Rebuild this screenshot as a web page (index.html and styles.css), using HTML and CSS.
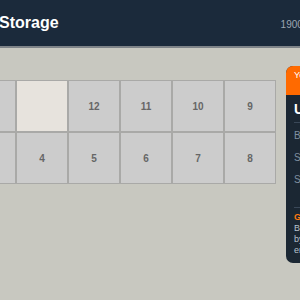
FILE: index.html
```html
<!DOCTYPE html>
<html>
<head>
<meta charset="utf-8">
<link rel="stylesheet" href="styles.css">
</head>
<body>
<header class="topbar">
  <h1 class="title">Storage</h1>
  <span class="meta">1900 / 2400 kg</span>
</header>
<main class="main">
  <section class="grid">
    <div class="cell"></div>
    <div class="cell cell-empty"></div>
    <div class="cell">12</div>
    <div class="cell">11</div>
    <div class="cell">10</div>
    <div class="cell">9</div>
    <div class="cell">3</div>
    <div class="cell">4</div>
    <div class="cell">5</div>
    <div class="cell">6</div>
    <div class="cell">7</div>
    <div class="cell">8</div>
  </section>
  <aside class="panel">
    <div class="panel-head">Your selection</div>
    <div class="panel-body">
      <div class="panel-title">Unit 13</div>
      <div class="row">Bay: A</div>
      <div class="row">Size: 2 × 2 m</div>
      <div class="row">Status: free</div>
      <div class="guide">
        <div class="guide-title">Guide</div>
        <div class="guide-line">Bays are numbered</div>
        <div class="guide-line">by row, from the</div>
        <div class="guide-line">entrance side.</div>
      </div>
    </div>
  </aside>
</main>
</body>
</html>
```

FILE: styles.css
```css
html, body {
  margin: 0;
  padding: 0;
}
body {
  background: #c8c8c0;
  font-family: "Liberation Sans", Arial, sans-serif;
  overflow: hidden;
  width: 300px;
  height: 300px;
}
.topbar {
  height: 46px;
  background: #1b2a3b;
  border-bottom: 2px solid #7e8388;
  display: flex;
  align-items: center;
  white-space: nowrap;
  overflow: hidden;
}
.title {
  margin: 0 0 0 -1px;
  font-size: 16px;
  font-weight: bold;
  color: #ffffff;
}
.meta {
  margin-left: 222px;
  font-size: 10px;
  color: #9ba6b2;
  padding-top: 3px;
}
.main {
  display: flex;
  align-items: flex-start;
  padding-top: 18px;
}
.grid {
  flex: none;
  margin-top: 14px;
  margin-left: -36px;
  display: grid;
  grid-template-columns: repeat(6, 52px);
  grid-auto-rows: 52px;
}
.cell {
  box-sizing: border-box;
  border: 1px solid #a9a9a7;
  background: #cccccc;
  display: flex;
  align-items: center;
  justify-content: center;
  font-size: 10px;
  font-weight: bold;
  color: #666666;
}
.cell-empty {
  background: #e7e3dd;
}
.panel {
  flex: none;
  width: 180px;
  margin-left: 10px;
  border-radius: 7px;
  overflow: hidden;
  background: #1b2733;
}
.panel-head {
  background: #ff6a00;
  color: #ffffff;
  font-size: 9px;
  height: 29px;
  box-sizing: border-box;
  padding: 4px 8px 0;
}
.panel-body {
  padding: 6px 8px 7px;
}
.panel-title {
  font-size: 14px;
  font-weight: bold;
  color: #ffffff;
  padding-bottom: 5px;
  border-bottom: 1px solid #3a4858;
  margin-bottom: 6px;
}
.row {
  font-size: 10px;
  color: #7f8fa0;
  height: 22px;
  line-height: 14px;
}
.guide {
  margin-top: 12px;
  border-top: 1px solid #3a4858;
  padding-top: 4px;
}
.guide-title {
  font-size: 9px;
  font-weight: bold;
  color: #ff7a10;
  line-height: 11px;
}
.guide-line {
  font-size: 9px;
  color: #b9c2cc;
  line-height: 11px;
}
```
